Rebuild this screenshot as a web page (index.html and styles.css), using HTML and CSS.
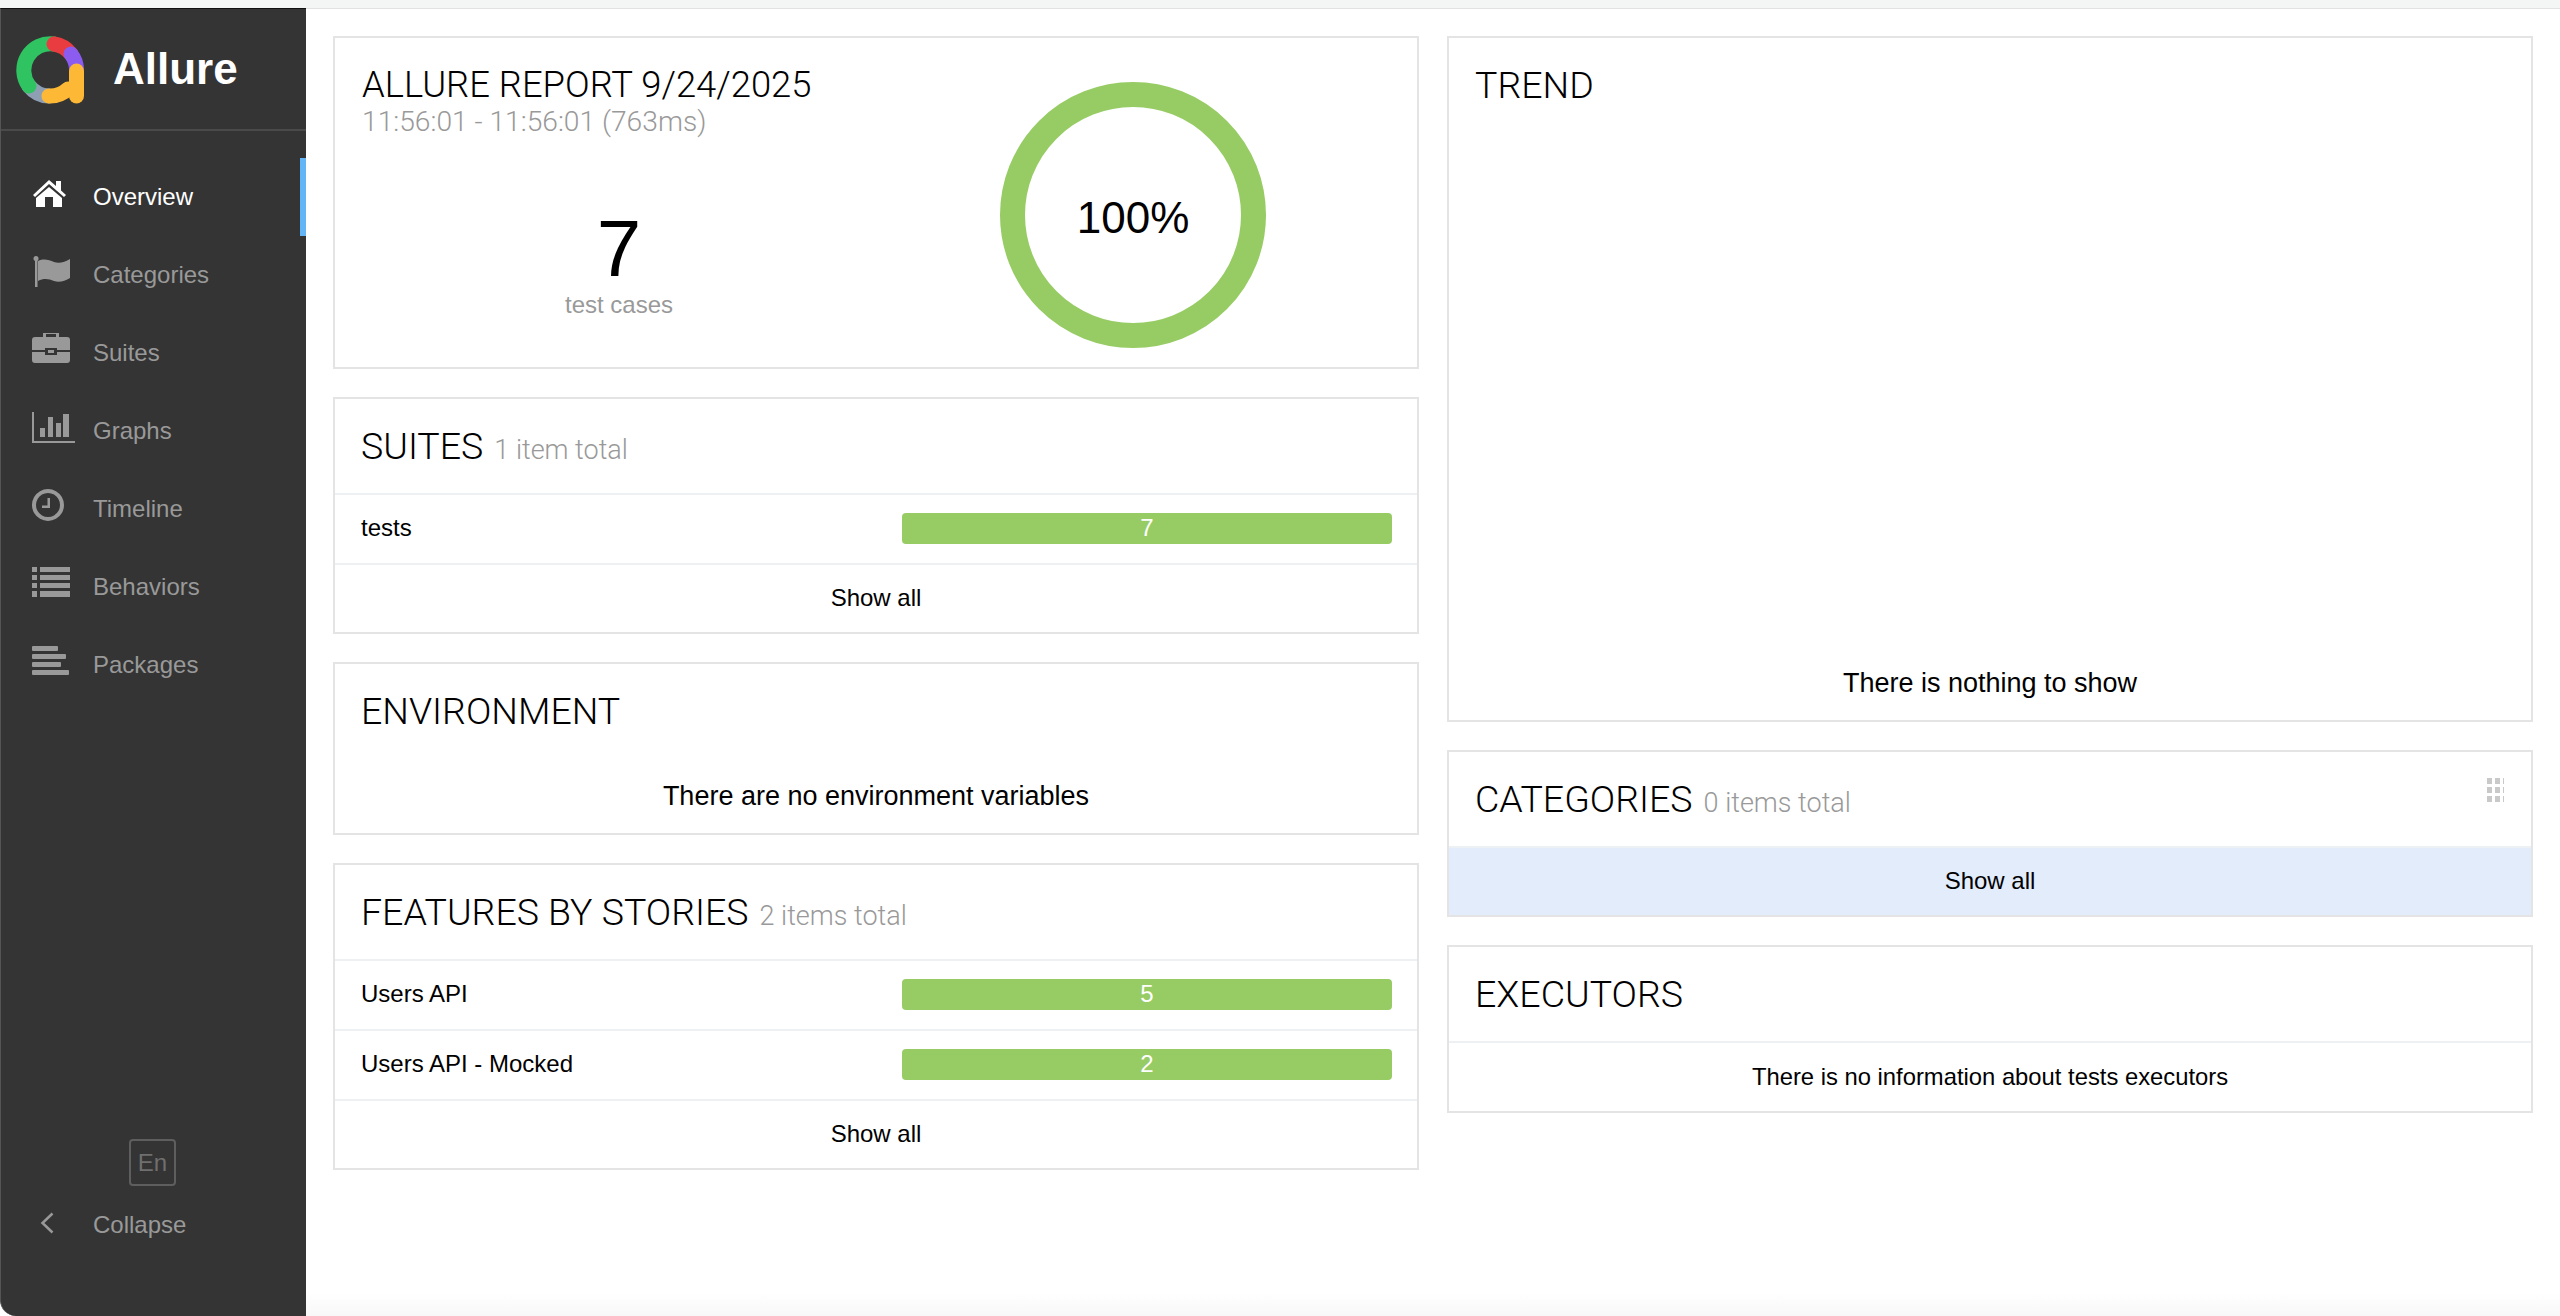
FILE: index.html
```html
<!DOCTYPE html>
<html lang="en">
<head>
    <meta charset="UTF-8">
    <meta name="viewport" content="width=device-width, initial-scale=1.0">
    <title>Allure Report</title>
    <link rel="stylesheet" href="styles.css">
</head>
<body>
    <div class="topbar"></div>
    <div class="app">
        <!-- Side navigation -->
        <aside class="sidebar">
            <div class="brand">
                <svg class="logo" viewBox="0 0 68 68" width="68" height="68">
                    <g fill="none" stroke-width="15" stroke-linecap="round">
                        <path d="M13 50 A26.5 26.5 0 0 0 33 60" stroke="#8f9fb3"/>
                        <path d="M13 50 A26.5 26.5 0 0 1 38 8" stroke="#2fc461"/>
                        <path d="M38 8 A26.5 26.5 0 0 1 55 18" stroke="#e83c40"/>
                        <path d="M55 18 A26.5 26.5 0 0 1 60.5 35" stroke="#8c5cf0"/>
                        <path d="M33 60 A26.5 26.5 0 0 0 52 53" stroke="#fdb835"/>
                        <path d="M60.5 35 V60" stroke="#fdb835"/>
                    </g>
                </svg>
                <span class="brand-name">Allure</span>
            </div>
            <nav class="nav">
                <a class="nav-item active">
                    <svg class="nav-icon" viewBox="0 0 61 32"><path fill="currentColor" transform="translate(1 3)" d="M16 0 L23 6 V1 H28 V10.500 L33 15 L31 17 L16 4 L2 17 L0 15 Z M16 7 L29 18 V27 H20 V17 H12 V27 H3 V18 Z"/></svg>
                    <span>Overview</span>
                </a>
                <a class="nav-item">
                    <svg class="nav-icon" viewBox="0 0 61 32"><g fill="currentColor" transform="translate(0 1)"><circle cx="4" cy="2.500" r="2.500"/><rect x="3" y="3" width="2.500" height="28"/><path d="M6 5 C12 2 17 4 22 6 C27 8 33 6 38 3 V22 C33 25 27 27 22 25 C17 23 12 22 6 25 Z"/></g></svg>
                    <span>Categories</span>
                </a>
                <a class="nav-item">
                    <svg class="nav-icon" viewBox="0 0 61 32"><path fill="currentColor" fill-rule="evenodd" transform="translate(0 -2)" d="M11 6 V2.500 Q11 0 14 0 H24 Q27 0 27 2.500 V6 H35 Q38 6 38 9 V19 H25 V17 H13 V19 H0 V9 Q0 6 3 6 Z M14 6 H24 V3 H14 Z M0 21 H13 V24 H25 V21 H38 V29 Q38 32 35 32 H3 Q0 32 0 29 Z M16 19 H22 V22 H16 Z"/></svg>
                    <span>Suites</span>
                </a>
                <a class="nav-item">
                    <svg class="nav-icon" viewBox="0 0 61 32"><path fill="currentColor" transform="translate(0 1)" d="M0 0 H2 V29 H43 V31 H0 Z M8 16 H13 V25 H8 Z M16 5 H21 V25 H16 Z M24 11 H29 V25 H24 Z M31 2 H37 V25 H31 Z"/></svg>
                    <span>Graphs</span>
                </a>
                <a class="nav-item">
                    <svg class="nav-icon" viewBox="0 0 61 32"><path fill="currentColor" fill-rule="evenodd" d="M16 0 A16 16 0 1 1 15.990 0 Z M16 4 A12 12 0 1 0 16.010 4 Z M15.500 9 H18 V19 H10 V16.500 H15.500 Z"/></svg>
                    <span>Timeline</span>
                </a>
                <a class="nav-item">
                    <svg class="nav-icon" viewBox="0 0 61 32"><path fill="currentColor" d="M0 0 H5 V5 H0 Z M8 0 H38 V5 H8 Z M0 8 H5 V13 H0 Z M8 8 H38 V13 H8 Z M0 16 H5 V21 H0 Z M8 16 H38 V21 H8 Z M0 24 H5 V30 H0 Z M8 24 H38 V30 H8 Z"/></svg>
                    <span>Behaviors</span>
                </a>
                <a class="nav-item">
                    <svg class="nav-icon" viewBox="0 0 61 32"><path fill="currentColor" transform="translate(0 1)" d="M1 0 H25 Q26 0 26 1 V4 Q26 5 25 5 H1 Q0 5 0 4 V1 Q0 0 1 0 Z M1 8 H33 Q34 8 34 9 V12 Q34 13 33 13 H1 Q0 13 0 12 V9 Q0 8 1 8 Z M1 16 H28 Q29 16 29 17 V20 Q29 21 28 21 H1 Q0 21 0 20 V17 Q0 16 1 16 Z M1 24 H36 Q37 24 37 25 V28 Q37 29 36 29 H1 Q0 29 0 28 V25 Q0 24 1 24 Z"/></svg>
                    <span>Packages</span>
                </a>
            </nav>
            <div class="side-footer">
                <div class="lang">En</div>
                <a class="nav-item collapse">
                    <svg class="nav-icon" viewBox="0 0 61 32"><path fill="none" stroke="currentColor" stroke-width="2.500" d="M20.500 8.500 L10.500 18 L20.500 27.500"/></svg>
                    <span>Collapse</span>
                </a>
            </div>
        </aside>

        <!-- Report widgets -->
        <main class="content">
            <div class="column">
                <section class="card summary">
                    <div class="summary-left">
                        <h2 class="card-title report-title">ALLURE REPORT 9/24/2025</h2>
                        <div class="report-time">11:56:01 - 11:56:01 (763ms)</div>
                        <div class="stat">
                            <div class="stat-num">7</div>
                            <div class="stat-label">test cases</div>
                        </div>
                    </div>
                    <div class="summary-right">
                        <div class="donut">100%</div>
                    </div>
                </section>

                <section class="card">
                    <div class="card-head"><h2 class="card-title">SUITES</h2><span class="card-count">1 item total</span></div>
                    <div class="row">
                        <div class="row-name">tests</div>
                        <div class="bar">7</div>
                    </div>
                    <div class="show-all">Show all</div>
                </section>

                <section class="card">
                    <div class="card-head plain"><h2 class="card-title">ENVIRONMENT</h2></div>
                    <div class="empty">There are no environment variables</div>
                </section>

                <section class="card">
                    <div class="card-head"><h2 class="card-title">FEATURES BY STORIES</h2><span class="card-count">2 items total</span></div>
                    <div class="row">
                        <div class="row-name">Users API</div>
                        <div class="bar">5</div>
                    </div>
                    <div class="row">
                        <div class="row-name">Users API - Mocked</div>
                        <div class="bar">2</div>
                    </div>
                    <div class="show-all">Show all</div>
                </section>
            </div>

            <div class="column">
                <section class="card">
                    <div class="card-head plain"><h2 class="card-title">TREND</h2></div>
                    <div class="chart"></div>
                    <div class="empty">There is nothing to show</div>
                </section>

                <section class="card has-grip">
                    <div class="grip"><i></i><i></i><i></i><i></i><i></i><i></i><i></i><i></i><i></i></div>
                    <div class="card-head"><h2 class="card-title">CATEGORIES</h2><span class="card-count">0 items total</span></div>
                    <div class="show-all hover">Show all</div>
                </section>

                <section class="card">
                    <div class="card-head"><h2 class="card-title">EXECUTORS</h2></div>
                    <div class="note">There is no information about tests executors</div>
                </section>
            </div>
        </main>
    </div>
</body>
</html>
```

FILE: styles.css
```css
* {
    box-sizing: border-box;
}

html, body {
    height: 100%;
}

body {
    margin: 0;
    font-family: "Liberation Sans", Arial, sans-serif;
    font-size: 24px;
    color: #000;
    background-color: #fff;
    overflow: hidden;
}

.topbar {
    height: 9px;
    background-color: #f4f6f6;
    border-bottom: 1px solid #e2e2e2;
}

.app {
    display: flex;
    height: 1307px;
}

/* sidebar */
.sidebar {
    width: 306px;
    flex-shrink: 0;
    display: flex;
    flex-direction: column;
    margin-top: -1px;
    background-color: #343434;
    color: #999;
    border-top: 1px solid #111;
    border-left: 1px solid #555;
    border-bottom-left-radius: 16px;
}

.brand {
    height: 122px;
    display: flex;
    align-items: center;
    padding-left: 15px;
    border-bottom: 2px solid #4a4a4a;
}

.logo {
    margin-right: 29px;
    margin-top: 1px;
}

.brand-name {
    font-size: 44px;
    font-weight: bold;
    color: #fff;
}

.nav {
    flex: 1;
    padding-top: 27px;
}

.nav-item {
    height: 78px;
    display: flex;
    align-items: center;
    padding-left: 31px;
    position: relative;
}

.nav-icon {
    width: 61px;
    height: 32px;
    flex-shrink: 0;
    margin-top: -8px;
}

.nav-item.active {
    color: #fff;
}

.nav-item.active::after {
    content: "";
    position: absolute;
    right: 0;
    top: 0;
    bottom: 0;
    width: 6px;
    background-color: #64b5f6;
}

.side-footer {
    padding-bottom: 52px;
}

.lang {
    width: 47px;
    height: 47px;
    margin-left: 128px;
    display: flex;
    align-items: center;
    justify-content: center;
    border: 2px solid #5e5e5e;
    border-radius: 4px;
    color: #6f6f6f;
}

/* content */
.content {
    flex: 1;
    display: grid;
    grid-template-columns: 1086px 1086px;
    column-gap: 28px;
    align-items: start;
    padding: 27px 27px 0 27px;
    background: linear-gradient(to top, #f8f8f8, #fff 24px);
}

.column {
    display: flex;
    flex-direction: column;
    gap: 28px;
}

.card {
    position: relative;
    background-color: #fff;
    border: 2px solid #e4e4e4;
}

.card-head {
    height: 96px;
    padding: 25px 26px 0;
    border-bottom: 2px solid #edf1f4;
    white-space: nowrap;
}

.card-head.plain {
    border-bottom: none;
}

.card-title {
    display: inline;
    margin: 0;
    font-family: Roboto, "Liberation Sans", sans-serif;
    font-size: 37.5px;
    font-weight: 300;
}

.card-count {
    margin-left: 11px;
    font-family: Roboto, "Liberation Sans", sans-serif;
    font-size: 27px;
    font-weight: 300;
    color: #999;
}

.row {
    height: 70px;
    display: grid;
    grid-template-columns: 1fr 490px;
    align-items: center;
    padding: 0 25px 2px 26px;
    border-bottom: 2px solid #edf1f4;
}

.bar {
    height: 31px;
    line-height: 29px;
    text-align: center;
    color: #fff;
    background-color: #97cc64;
    border-radius: 4px;
}

.show-all {
    height: 67px;
    padding-bottom: 1px;
    display: flex;
    align-items: center;
    justify-content: center;
}

.show-all.hover {
    background-color: #e3ecfb;
}

.empty {
    height: 73px;
    display: flex;
    align-items: center;
    justify-content: center;
    font-size: 27px;
}

.note {
    height: 68px;
    display: flex;
    align-items: center;
    justify-content: center;
    font-size: 23.8px;
}

.chart {
    height: 513px;
}

.grip {
    position: absolute;
    top: 26px;
    right: 27px;
    display: grid;
    grid-template-columns: 5px 5px 1px;
    grid-auto-rows: 6px;
    gap: 3px;
}

.grip i {
    background-color: #c9c9c9;
}

/* summary widget */
.summary {
    height: 333px;
    display: grid;
    grid-template-columns: 514px 514px;
    padding: 0 25px 0 27px;
}

.report-title {
    display: block;
    margin-top: 25px;
    font-size: 36.4px;
}

.report-time {
    font-family: Roboto, "Liberation Sans", sans-serif;
    font-size: 28.2px;
    font-weight: 300;
    color: #999;
    margin-top: -1px;
}

.stat {
    margin-top: 67px;
    text-align: center;
}

.stat-num {
    font-size: 80px;
    line-height: 87px;
}

.stat-label {
    color: #999;
    line-height: 26px;
}

.summary-right {
    display: flex;
    justify-content: center;
    padding-top: 44px;
}

.donut {
    width: 266px;
    height: 266px;
    padding-top: 6px;
    display: flex;
    align-items: center;
    justify-content: center;
    border: 25px solid #97cc64;
    border-radius: 50%;
    font-size: 44px;
}
```
